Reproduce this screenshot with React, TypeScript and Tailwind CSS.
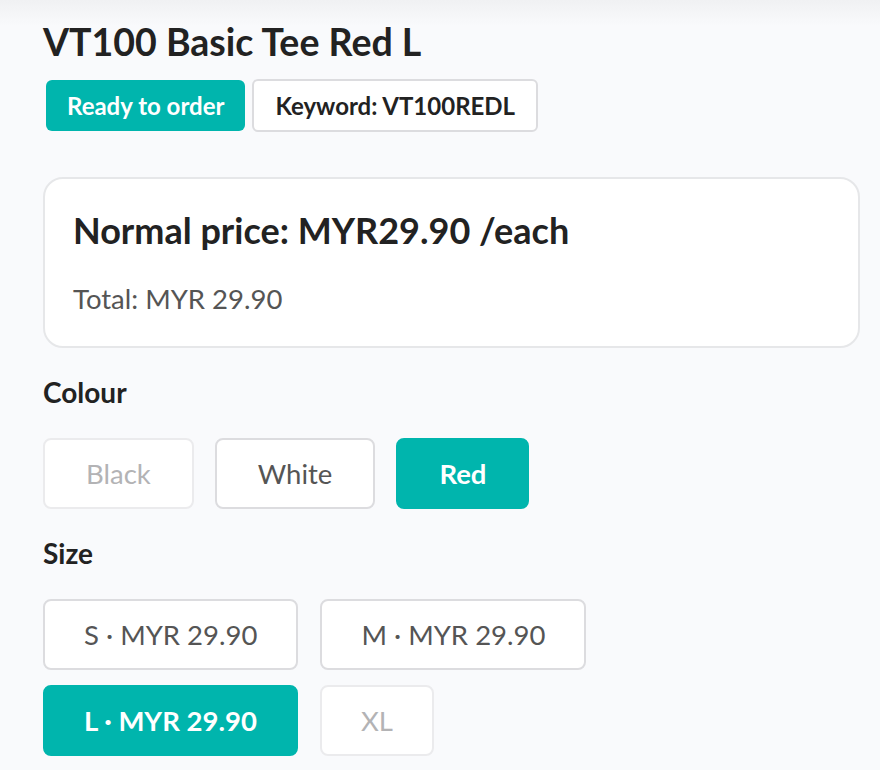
const colours = [
  { label: "Black", state: "disabled" },
  { label: "White", state: "idle" },
  { label: "Red", state: "active" },
];

const sizes = [
  { label: "S · MYR 29.90", state: "idle" },
  { label: "M · MYR 29.90", state: "idle" },
  { label: "L · MYR 29.90", state: "active" },
  { label: "XL", state: "disabled" },
];

function OptionButton({ label, state, pad }: { label: string; state: string; pad: string }) {
  const base = `h-[71px] ${pad} rounded-[8px] border-2 text-[27.5px] leading-none flex items-center justify-center`;
  if (state === "active") {
    return <button className={`${base} bg-[#00b5ad] border-[#00b5ad] text-white font-bold`}>{label}</button>;
  }
  if (state === "disabled") {
    return <button className={`${base} bg-white border-[#ebebed] text-[#b3b3b5]`}>{label}</button>;
  }
  return <button className={`${base} bg-white border-[#dcdcdf] text-[#555]`}>{label}</button>;
}

export default function App() {
  return (
    <div
      className="min-h-screen bg-[#f9fafc] bg-[linear-gradient(to_bottom,#f0f1f3_0px,#f9fafc_26px)] pl-[43px] pr-[20px] pt-[20px] pb-[20px] text-[#222]"
      style={{ fontFamily: "Lato, 'Noto Sans', sans-serif" }}
    >
      <h1 className="text-[37.5px] leading-[44px] font-bold">VT100 Basic Tee Red L</h1>

      <div className="mt-[15px] flex items-center gap-[7px] pl-[3px]">
        <span className="h-[51px] px-[21px] rounded-[6px] bg-[#00b5ad] text-white text-[24px] font-bold flex items-center">
          Ready to order
        </span>
        <span className="h-[53px] px-[21px] rounded-[6px] border-2 border-[#dcdcdf] bg-white text-[24px] font-bold flex items-center">
          Keyword: VT100REDL
        </span>
      </div>

      <div className="mt-[45px] rounded-[20px] border-2 border-[#e6e7e9] bg-white px-[28px] pt-[31px] pb-[31px]">
        <div className="text-[36px] leading-[41px] font-bold">Normal price: MYR29.90 /each</div>
        <div className="mt-[32px] text-[27.5px] leading-[32px] text-[#555]">Total: MYR 29.90</div>
      </div>

      <div className="mt-[28px] text-[28px] leading-[32px] font-bold">Colour</div>
      <div className="mt-[30px] flex gap-[21px]">
        {colours.map((c) => (
          <OptionButton key={c.label} label={c.label} state={c.state} pad="px-[41px]" />
        ))}
      </div>

      <div className="mt-[28px] text-[28px] leading-[32px] font-bold">Size</div>
      <div className="mt-[30px] flex flex-wrap gap-x-[22px] gap-y-[15px] w-[580px]">
        {sizes.map((s) => (
          <OptionButton key={s.label} label={s.label} state={s.state} pad="px-[39px]" />
        ))}
      </div>
    </div>
  );
}
